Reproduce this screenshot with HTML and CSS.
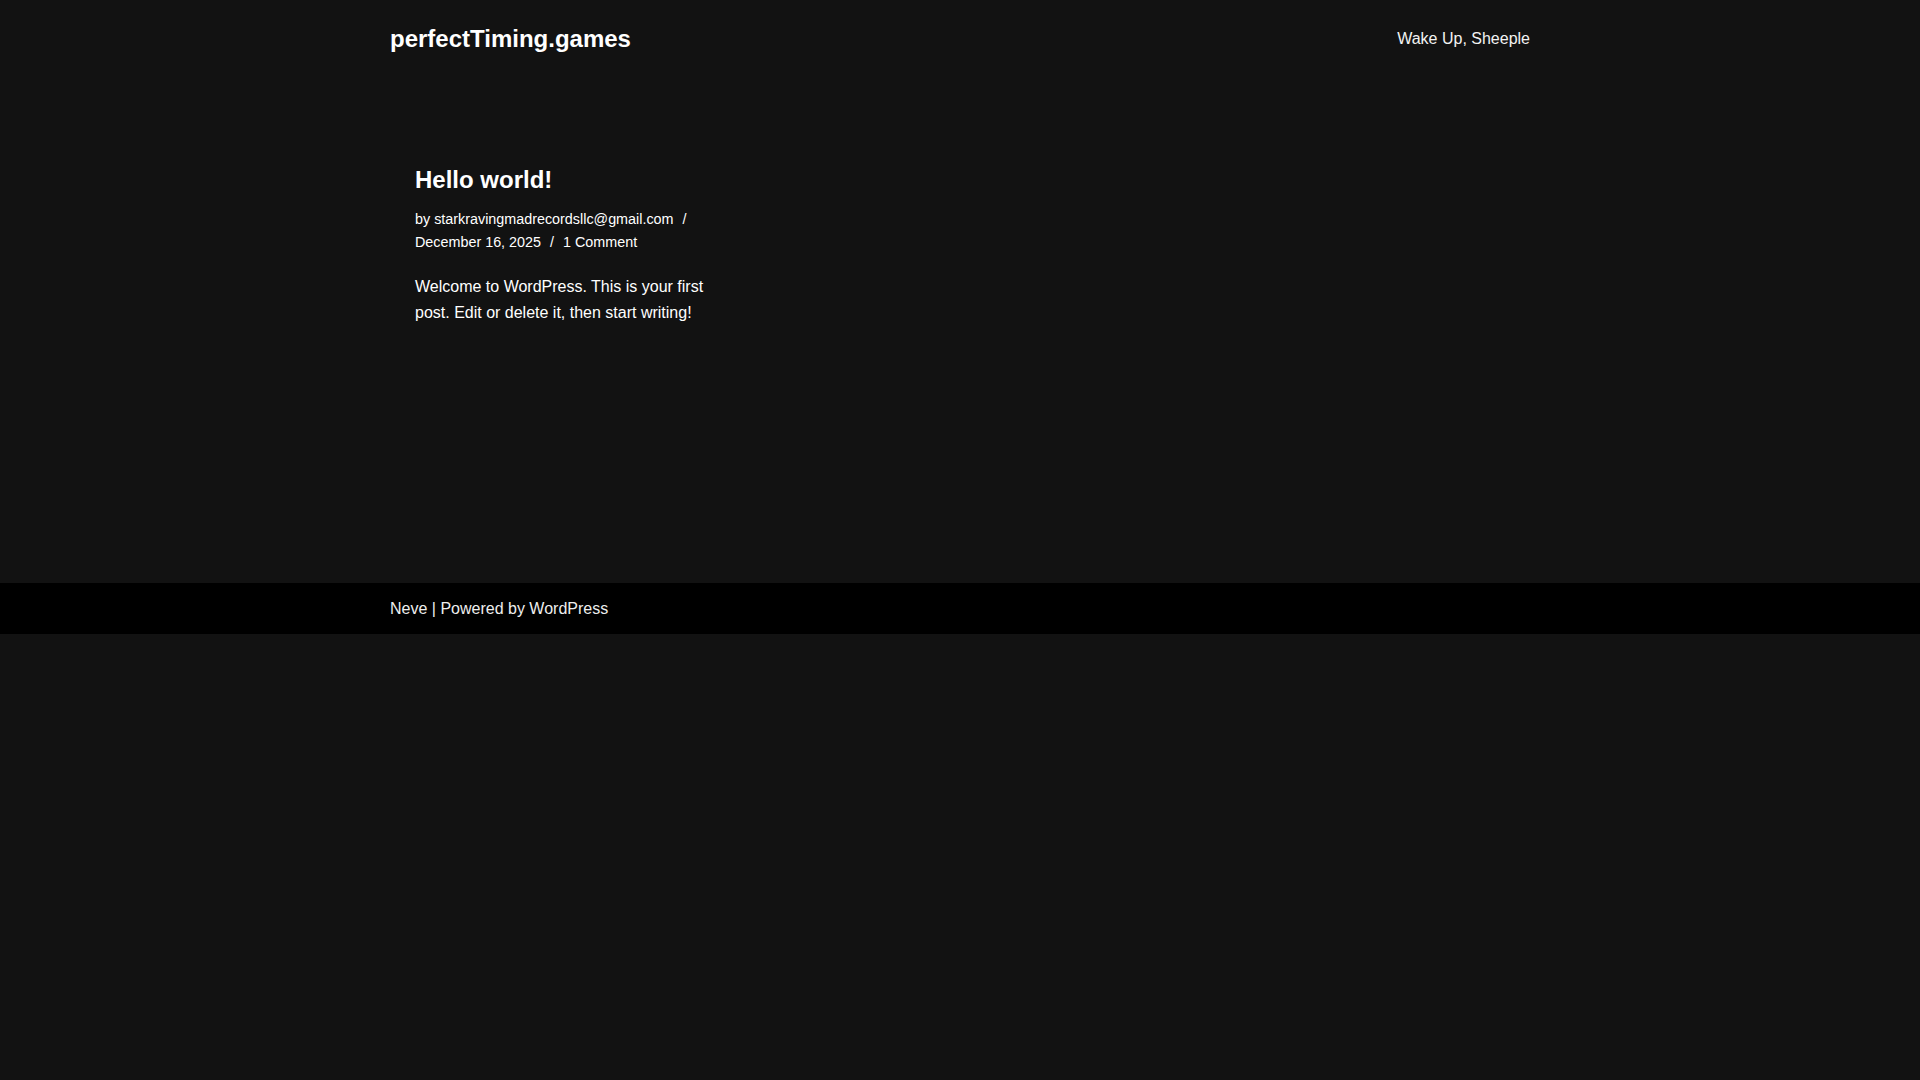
FILE: index.html
```html
<!DOCTYPE html>
<html lang="en-US">
<head>
    <meta charset="UTF-8">
    <meta name="viewport" content="width=device-width, initial-scale=1.0">
    <title>perfectTiming.games</title>
    <link rel="stylesheet" href="styles.css">
</head>
<body>
    <header class="site-header">
        <div class="container header-row">
            <a class="brand" href="#">perfectTiming.games</a>
            <nav class="primary-menu">
                <a href="#">Wake Up, Sheeple</a>
            </nav>
        </div>
    </header>

    <main class="site-main">
        <div class="container">
            <div class="posts-wrapper">
                <article class="post">
                    <h2 class="entry-title"><a href="#">Hello world!</a></h2>
                    <ul class="entry-meta">
                        <li>by <a href="#">starkravingmadrecordsllc@gmail.com</a></li>
                        <li>December 16, 2025</li>
                        <li><a href="#">1 Comment</a></li>
                    </ul>
                    <div class="excerpt">
                        <p>Welcome to WordPress. This is your first post. Edit or delete it, then start writing!</p>
                    </div>
                </article>
            </div>
        </div>
    </main>

    <footer class="site-footer">
        <div class="container">
            <p class="credits"><a href="#">Neve</a> | Powered by <a href="#">WordPress</a></p>
        </div>
    </footer>
</body>
</html>
```

FILE: styles.css
```css
html, body {
    margin: 0;
    padding: 0;
}
body {
    font-family: "Liberation Sans", Arial, sans-serif;
    font-size: 16px;
    line-height: 1.6;
    color: #ffffff;
    background-color: #121212;
}
a {
    color: inherit;
    text-decoration: none;
}
.container {
    max-width: 1140px;
    margin: 0 auto;
    padding: 0 15px;
}

/* header */
.site-header {
    padding: 24px 0 22px;
}
.header-row {
    display: flex;
    justify-content: space-between;
    align-items: center;
}
.brand {
    font-size: 24px;
    font-weight: 700;
    line-height: 1.25;
}
.primary-menu a {
    font-size: 16px;
    color: #f2f2f2;
}

/* posts */
.site-main {
    padding: 88px 0 258px;
}
.posts-wrapper {
    display: grid;
    grid-template-columns: repeat(3, 1fr);
    gap: 30px;
}
.post {
    padding: 0 25px;
}
.entry-title {
    margin: 0 0 13px;
    font-size: 24px;
    line-height: 1.3;
    font-weight: 700;
}
.entry-meta {
    list-style: none;
    margin: 0 0 21px;
    padding: 0;
    font-size: 14.35px;
    line-height: 22.4px;
}
.entry-meta li {
    display: inline;
}
.entry-meta li:not(:last-child)::after {
    content: "/";
    padding: 0 5px 0 9px;
}
.excerpt p {
    margin: 0;
}

/* footer */
.site-footer {
    background-color: #000000;
    padding: 13px 0 12px;
}
.credits {
    margin: 0;
    color: #eeeeee;
}
```
